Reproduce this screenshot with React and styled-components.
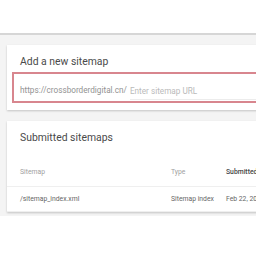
import React from 'react';
import styled, { createGlobalStyle } from 'styled-components';

const GlobalStyle = createGlobalStyle`
  html, body {
    margin: 0;
    padding: 0;
    background: #fff;
    overflow: hidden;
    font-family: Roboto, "Liberation Sans", sans-serif;
  }
`;

const TopBar = styled.div`
  height: 33px;
  background: #fff;
  border-bottom: 2px solid #d6d6d6;
`;

const Main = styled.div`
  background: #f4f4f4;
  padding: 10px 0 4px 7px;
  display: flex;
  flex-direction: column;
  gap: 11px;
`;

const Card = styled.div`
  width: 320px;
  background: #fff;
  box-shadow: 0 1px 2px rgba(0, 0, 0, 0.2);
  padding: ${p => p.$pad || '0'};
`;

const Title = styled.div`
  font-size: 10.4px;
  color: #4a4a4a;
  padding-left: 13px;
  line-height: 14px;
`;

const InputBox = styled.div`
  margin: 3px 0 0 5px;
  border: 2px solid #d8868e;
  display: flex;
  align-items: center;
  padding: 4px 0 0 6px;
  height: 23px;
  font-size: 8.2px;
`;

const Prefix = styled.span`
  color: #929292;
`;

const Field = styled.span`
  flex: 1;
  color: #bababa;
  margin-left: 3px;
  padding: 3px 0;
  border-bottom: 1px solid #ececec;
  transform: translateY(2px);
`;

const Table = styled.div`
  margin-top: 12px;
`;

const Row = styled.div`
  display: grid;
  grid-template-columns: 151px 55px 1fr;
  padding-left: 13px;
  height: ${p => p.$h}px;
  align-items: center;
  border-bottom: 1px solid #efefef;
  font-size: 6.8px;
  color: ${p => (p.$head ? '#a0a0a0' : '#666')};
`;

const Cell = styled.span`
  color: ${p => (p.$strong ? '#444' : 'inherit')};
  font-weight: ${p => (p.$strong ? 500 : 400)};
  white-space: nowrap;
`;

export default function App() {
  return (
    <>
      <GlobalStyle />
      <TopBar />
      <Main>
        <Card $pad="10px 0 7px 0">
          <Title>Add a new sitemap</Title>
          <InputBox>
            <Prefix>https://crossborderdigital.cn/</Prefix>
            <Field>Enter sitemap URL</Field>
          </InputBox>
        </Card>
        <Card $pad="10px 0 0 0">
          <Title>Submitted sitemaps</Title>
          <Table>
            <Row $head $h={29}>
              <Cell>Sitemap</Cell>
              <Cell>Type</Cell>
              <Cell $strong>Submitted</Cell>
            </Row>
            <Row $h={24}>
              <Cell>/sitemap_index.xml</Cell>
              <Cell>Sitemap index</Cell>
              <Cell>Feb 22, 2019</Cell>
            </Row>
          </Table>
        </Card>
      </Main>
    </>
  );
}
